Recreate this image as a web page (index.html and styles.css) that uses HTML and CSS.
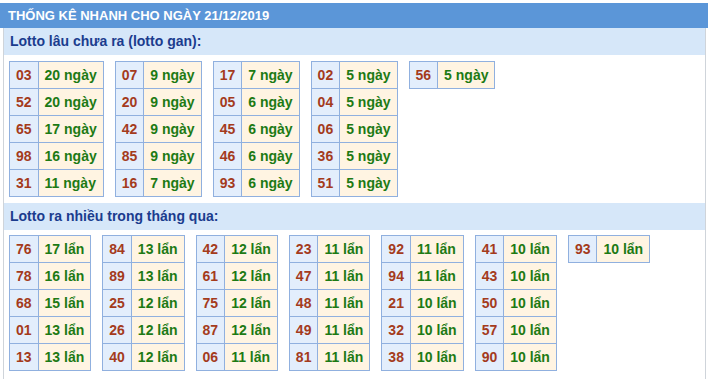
FILE: index.html
```html
<!DOCTYPE html>
<html lang="vi">
<head>
<meta charset="utf-8">
<title>Thống kê nhanh</title>
<link rel="stylesheet" href="styles.css">
</head>
<body>
<div class="page">
  <div class="title">THỐNG KÊ NHANH CHO NGÀY 21/12/2019</div>
  <div class="box">
    <div class="sub">Lotto lâu chưa ra (lotto gan):</div>
    <div class="tables tables-first">
      <table class="lt"><tr><td class="n">03</td><td class="v">20 ngày</td></tr><tr><td class="n">52</td><td class="v">20 ngày</td></tr><tr><td class="n">65</td><td class="v">17 ngày</td></tr><tr><td class="n">98</td><td class="v">16 ngày</td></tr><tr><td class="n">31</td><td class="v">11 ngày</td></tr></table>
      <table class="lt"><tr><td class="n">07</td><td class="v">9 ngày</td></tr><tr><td class="n">20</td><td class="v">9 ngày</td></tr><tr><td class="n">42</td><td class="v">9 ngày</td></tr><tr><td class="n">85</td><td class="v">9 ngày</td></tr><tr><td class="n">16</td><td class="v">7 ngày</td></tr></table>
      <table class="lt"><tr><td class="n">17</td><td class="v">7 ngày</td></tr><tr><td class="n">05</td><td class="v">6 ngày</td></tr><tr><td class="n">45</td><td class="v">6 ngày</td></tr><tr><td class="n">46</td><td class="v">6 ngày</td></tr><tr><td class="n">93</td><td class="v">6 ngày</td></tr></table>
      <table class="lt"><tr><td class="n">02</td><td class="v">5 ngày</td></tr><tr><td class="n">04</td><td class="v">5 ngày</td></tr><tr><td class="n">06</td><td class="v">5 ngày</td></tr><tr><td class="n">36</td><td class="v">5 ngày</td></tr><tr><td class="n">51</td><td class="v">5 ngày</td></tr></table>
      <table class="lt"><tr><td class="n">56</td><td class="v">5 ngày</td></tr></table>
    </div>
    <div class="sub">Lotto ra nhiều trong tháng qua:</div>
    <div class="tables tables-second">
      <table class="lt"><tr><td class="n">76</td><td class="v">17 lẩn</td></tr><tr><td class="n">78</td><td class="v">16 lẩn</td></tr><tr><td class="n">68</td><td class="v">15 lẩn</td></tr><tr><td class="n">01</td><td class="v">13 lẩn</td></tr><tr><td class="n">13</td><td class="v">13 lẩn</td></tr></table>
      <table class="lt"><tr><td class="n">84</td><td class="v">13 lẩn</td></tr><tr><td class="n">89</td><td class="v">13 lẩn</td></tr><tr><td class="n">25</td><td class="v">12 lẩn</td></tr><tr><td class="n">26</td><td class="v">12 lẩn</td></tr><tr><td class="n">40</td><td class="v">12 lẩn</td></tr></table>
      <table class="lt"><tr><td class="n">42</td><td class="v">12 lẩn</td></tr><tr><td class="n">61</td><td class="v">12 lẩn</td></tr><tr><td class="n">75</td><td class="v">12 lẩn</td></tr><tr><td class="n">87</td><td class="v">12 lẩn</td></tr><tr><td class="n">06</td><td class="v">11 lẩn</td></tr></table>
      <table class="lt"><tr><td class="n">23</td><td class="v">11 lẩn</td></tr><tr><td class="n">47</td><td class="v">11 lẩn</td></tr><tr><td class="n">48</td><td class="v">11 lẩn</td></tr><tr><td class="n">49</td><td class="v">11 lẩn</td></tr><tr><td class="n">81</td><td class="v">11 lẩn</td></tr></table>
      <table class="lt"><tr><td class="n">92</td><td class="v">11 lẩn</td></tr><tr><td class="n">94</td><td class="v">11 lẩn</td></tr><tr><td class="n">21</td><td class="v">10 lẩn</td></tr><tr><td class="n">32</td><td class="v">10 lẩn</td></tr><tr><td class="n">38</td><td class="v">10 lẩn</td></tr></table>
      <table class="lt"><tr><td class="n">41</td><td class="v">10 lẩn</td></tr><tr><td class="n">43</td><td class="v">10 lẩn</td></tr><tr><td class="n">50</td><td class="v">10 lẩn</td></tr><tr><td class="n">57</td><td class="v">10 lẩn</td></tr><tr><td class="n">90</td><td class="v">10 lẩn</td></tr></table>
      <table class="lt"><tr><td class="n">93</td><td class="v">10 lẩn</td></tr></table>
    </div>
  </div>
</div>
</body>
</html>
```

FILE: styles.css
```css
html, body {
  margin: 0;
  padding: 0;
  background: #ffffff;
}
body {
  font-family: "Liberation Sans", Arial, sans-serif;
  padding-top: 3px;
}
.title {
  height: 25px;
  line-height: 25px;
  background: #5b96d8;
  color: #ffffff;
  font-weight: bold;
  font-size: 13px;
  padding-left: 8px;
}
.box {
  margin: 0 2px 0 3px;
  border-left: 1px solid #cfd4da;
  border-right: 1px solid #cfd4da;
  min-height: 360px;
}
.sub {
  height: 27px;
  line-height: 27px;
  background: #d6e7f9;
  color: #1b3c8e;
  font-weight: bold;
  font-size: 14px;
  padding-left: 6px;
}
.tables {
  display: flex;
  align-items: flex-start;
  gap: 11px;
  padding: 6px 0 6px 5px;
}
.tables-second {
  padding-top: 5px;
}
.lt {
  border-collapse: collapse;
  font-size: 14px;
  font-weight: bold;
}
.lt td {
  border: 1px solid #90b0df;
  padding: 0 6px;
  height: 26px;
  line-height: 16px;
  white-space: nowrap;
}
.lt .n {
  background: #e3eefc;
  color: #a43b1c;
  text-align: center;
}
.lt .v {
  background: #fff4e2;
  color: #1d7a14;
}
```
